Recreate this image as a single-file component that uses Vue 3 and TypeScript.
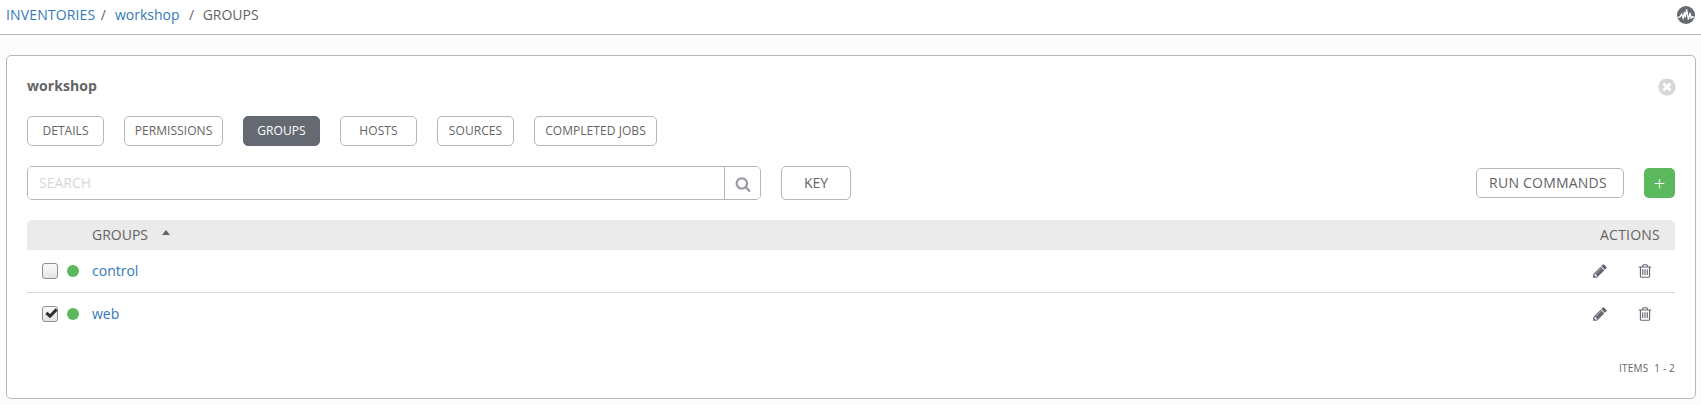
<script setup lang="ts">
import { ref } from 'vue'

interface Group {
  name: string
  checked: boolean
}

const tabs: string[] = ['DETAILS', 'PERMISSIONS', 'GROUPS', 'HOSTS', 'SOURCES', 'COMPLETED JOBS']
const activeTab = ref('GROUPS')
const search = ref('')
const groups = ref<Group[]>([
  { name: 'control', checked: false },
  { name: 'web', checked: true },
])
</script>

<template>
  <div class="page">
    <header class="topbar">
      <nav class="crumbs">
        <a class="link root">INVENTORIES</a>
        <span class="sep sep-first">/</span>
        <a class="link">workshop</a>
        <span class="sep">/</span>
        <span>GROUPS</span>
      </nav>
      <svg class="activity" viewBox="0 0 18 18">
        <circle cx="9" cy="9" r="9" />
        <path d="M0.8 11.2H3L4.6 8L6.2 12.2L7.4 6L8.2 11.4L9.6 3.4L11.4 13.6L13 6.8L14.2 12L15.2 10.8L17.2 11.4" />
      </svg>
    </header>

    <main class="panel">
      <div class="panel-head">
        <h1 class="title">workshop</h1>
        <svg class="close" viewBox="0 0 1792 1792">
          <path d="M1277 1122q0-26-19-45l-181-181 181-181q19-19 19-45 0-27-19-46l-90-90q-19-18-46-18-26 0-45 18l-181 181-181-181q-19-18-45-18-27 0-46 18l-90 90q-19 19-19 46 0 26 19 45l181 181-181 181q-19 19-19 45 0 27 19 46l90 90q19 18 46 18 26 0 45-18l181-181 181 181q19 18 45 18 27 0 46-18l90-90q19-19 19-46zm387-226q0 209-103 385.5t-279.5 279.5-385.5 103-385.5-103-279.5-279.5-103-385.5 103-385.5 279.5-279.5 385.5-103 385.5 103 279.5 279.5 103 385.5z" />
        </svg>
      </div>

      <div class="tabs">
        <button
          v-for="tab in tabs"
          :key="tab"
          class="tab"
          :class="{ active: tab === activeTab }"
          @click="activeTab = tab"
        >{{ tab }}</button>
      </div>

      <div class="toolbar">
        <div class="search">
          <input v-model="search" class="search-input" placeholder="SEARCH" />
          <button class="search-btn" aria-label="Search">
            <svg viewBox="0 0 1792 1792">
              <path d="M1216 832q0-185-131.5-316.5t-316.5-131.5-316.5 131.5-131.5 316.5 131.5 316.5 316.5 131.5 316.5-131.5 131.5-316.5zm512 832q0 52-38 90t-90 38q-54 0-90-38l-343-342q-179 124-399 124-143 0-273.5-55.5t-225-150-150-225-55.5-273.5 55.5-273.5 150-225 225-150 273.5-55.5 273.5 55.5 225 150 150 225 55.5 273.5q0 220-124 399l343 343q37 37 37 90z" />
            </svg>
          </button>
        </div>
        <button class="btn key">KEY</button>
        <button class="btn run">RUN COMMANDS</button>
        <button class="add">+</button>
      </div>

      <div class="table">
        <div class="thead">
          <span class="col-name">GROUPS</span>
          <i class="caret"></i>
          <span class="col-actions">ACTIONS</span>
        </div>
        <div v-for="group in groups" :key="group.name" class="row">
          <span class="check" @click="group.checked = !group.checked">
            <svg v-if="group.checked" viewBox="0 0 16 16">
              <path d="M4.4 6.8L8 10.2L14.6 3.4" />
            </svg>
          </span>
          <i class="dot"></i>
          <a class="link name">{{ group.name }}</a>
          <svg class="icon pencil" viewBox="0 0 1792 1792">
            <path d="M491 1536l91-91-235-235-91 91v107h128v128h107zm523-928q0-22-22-22-10 0-17 7l-542 542q-7 7-7 17 0 22 22 22 10 0 17-7l542-542q7-7 7-17zm-54-192l416 416-832 832h-416v-416zm683 96q0 53-37 90l-166 166-416-416 166-165q36-38 90-38 53 0 91 38l235 234q37 39 37 91z" />
          </svg>
          <svg class="icon trash" viewBox="0 0 1792 1792">
            <path d="M704 736v576q0 14-9 23t-23 9h-64q-14 0-23-9t-9-23v-576q0-14 9-23t23-9h64q14 0 23 9t9 23zm256 0v576q0 14-9 23t-23 9h-64q-14 0-23-9t-9-23v-576q0-14 9-23t23-9h64q14 0 23 9t9 23zm256 0v576q0 14-9 23t-23 9h-64q-14 0-23-9t-9-23v-576q0-14 9-23t23-9h64q14 0 23 9t9 23zm128 724v-948h-896v948q0 22 7 40.5t14.5 27 10.5 8.5h832q3 0 10.5-8.5t14.5-27 7-40.5zm-672-1076h448l-48-117q-7-9-17-11h-317q-10 2-17 11zm928 32v64q0 14-9 23t-23 9h-96v948q0 83-47 143.5t-113 60.5h-832q-66 0-113-58.5t-47-141.5v-952h-96q-14 0-23-9t-9-23v-64q0-14 9-23t23-9h309l70-167q15-37 54-63t79-26h320q40 0 79 26t54 63l70 167h309q14 0 23 9t9 23z" />
          </svg>
        </div>
      </div>

      <footer class="items">
        <span>ITEMS</span>
        <span>1 - 2</span>
      </footer>
    </main>
  </div>
</template>

<style>
body {
  margin: 0;
  background: #fcfcfc;
}
</style>

<style scoped>
.page {
  height: 405px;
  overflow: hidden;
  box-sizing: border-box;
  background: #fcfcfc;
  color: #646464;
  font: 14px/20px "Open Sans", "Noto Sans", sans-serif;
}
.page * {
  box-sizing: border-box;
}
.link {
  color: #337ab7;
}
.root {
  letter-spacing: 0.14px;
}
button,
input {
  font-family: inherit;
  color: inherit;
  margin: 0;
}
.topbar {
  display: flex;
  justify-content: space-between;
  height: 35px;
  padding: 5px 6px 0;
  background: #fff;
  border-bottom: 1px solid #b7b7b7;
}
.crumbs {
  display: flex;
  white-space: pre;
}
.sep {
  margin: 0 8.5px 0 9.5px;
}
.sep-first {
  margin: 0 9px 0 5.5px;
}
.activity {
  width: 18px;
  height: 18px;
  margin-top: 1px;
}
.activity circle {
  fill: #646972;
}
.activity path {
  fill: none;
  stroke: #fff;
  stroke-width: 1.3;
}
.panel {
  margin: 20px 5px 0 6px;
  height: 344px;
  padding: 20px;
  background: #fff;
  border: 1px solid #b7b7b7;
  border-radius: 5px;
}
.panel-head {
  display: flex;
  justify-content: space-between;
  height: 40px;
}
.title {
  margin: 0;
  font-size: 14px;
  line-height: 20px;
  font-weight: 700;
  letter-spacing: 0.08px;
}
.close {
  width: 20px;
  height: 20px;
  margin: 1px -1.5px 0 0;
  fill: #d7d7d7;
}
.tabs {
  display: flex;
  gap: 20px;
}
.tab {
  width: 77px;
  height: 30px;
  padding: 0;
  font-size: 12px;
  line-height: 28px;
  letter-spacing: 0.06px;
  background: #fff;
  border: 1px solid #b7b7b7;
  border-radius: 5px;
}
.tab:nth-child(2) {
  width: 99px;
}
.tab:last-child {
  width: 123px;
}
.tab.active {
  color: #fff;
  background: #646972;
  border-color: #646972;
}
.toolbar {
  display: flex;
  align-items: center;
  height: 34px;
  margin-top: 20px;
}
.search {
  display: flex;
  width: 734px;
  height: 34px;
  border: 1px solid #b7b7b7;
  border-radius: 5px;
  overflow: hidden;
}
.search-input {
  flex: 1;
  min-width: 0;
  border: 0;
  padding: 0 11px 2px;
  font-size: 14px;
  outline: none;
  background: #fff;
}
.search-input::placeholder {
  color: #d7d7d7;
  opacity: 1;
}
.search-btn {
  display: flex;
  align-items: center;
  width: 36px;
  padding: 2px 0 0 9.5px;
  border: 0;
  border-left: 1px solid #b7b7b7;
  background: #fff;
}
.search-btn svg {
  width: 16px;
  height: 16px;
  fill: #9a9da3;
}
.btn {
  padding: 0 0 2px;
  font-size: 14px;
  background: #fff;
  border: 1px solid #b7b7b7;
  border-radius: 5px;
}
.key {
  width: 70px;
  height: 34px;
  margin-left: 20px;
}
.run {
  width: 148px;
  height: 30px;
  margin-left: auto;
  padding-right: 4px;
  letter-spacing: 0.22px;
}
.add {
  width: 31px;
  height: 30px;
  margin-left: 20px;
  padding: 1px 0 0;
  border: 0;
  border-radius: 5px;
  background: #5cb85c;
  color: #fff;
  font-size: 20px;
  font-weight: 300;
  line-height: 29px;
}
.table {
  margin-top: 20px;
}
.thead {
  display: flex;
  align-items: center;
  height: 30px;
  padding: 0 15px 0 65px;
  background: #ebebeb;
  border-radius: 5px 5px 0 0;
}
.caret {
  width: 0;
  height: 0;
  margin: -6px 0 0 14px;
  border: 4px solid transparent;
  border-top: 0;
  border-bottom: 5px solid #646464;
}
.col-actions {
  margin-left: auto;
  letter-spacing: 0.22px;
}
.row {
  display: flex;
  align-items: center;
  height: 43px;
  padding: 0 22px 0 15px;
  border-bottom: 1px solid #d7d7d7;
}
.row:last-child {
  border-bottom-color: transparent;
}
.check {
  width: 16px;
  height: 16px;
  border: 1px solid #8f8f8c;
  border-radius: 3px;
  background: linear-gradient(#fafafa, #e4e4e3);
}
.check svg {
  display: block;
  width: 16px;
  height: 16px;
  margin: -1px;
  overflow: visible;
}
.check path {
  fill: none;
  stroke: #2b2f31;
  stroke-width: 3;
}
.dot {
  width: 12px;
  height: 12px;
  margin-left: 9px;
  border-radius: 50%;
  background: #5cb85c;
}
.name {
  margin-left: 13px;
}
.icon {
  width: 16px;
  height: 16px;
  fill: #646972;
}
.pencil {
  margin-left: auto;
}
.trash {
  margin-left: 29px;
}
.items {
  display: flex;
  justify-content: flex-end;
  gap: 6px;
  margin-top: 22px;
  font-size: 10px;
  letter-spacing: 0.17px;
}
</style>
